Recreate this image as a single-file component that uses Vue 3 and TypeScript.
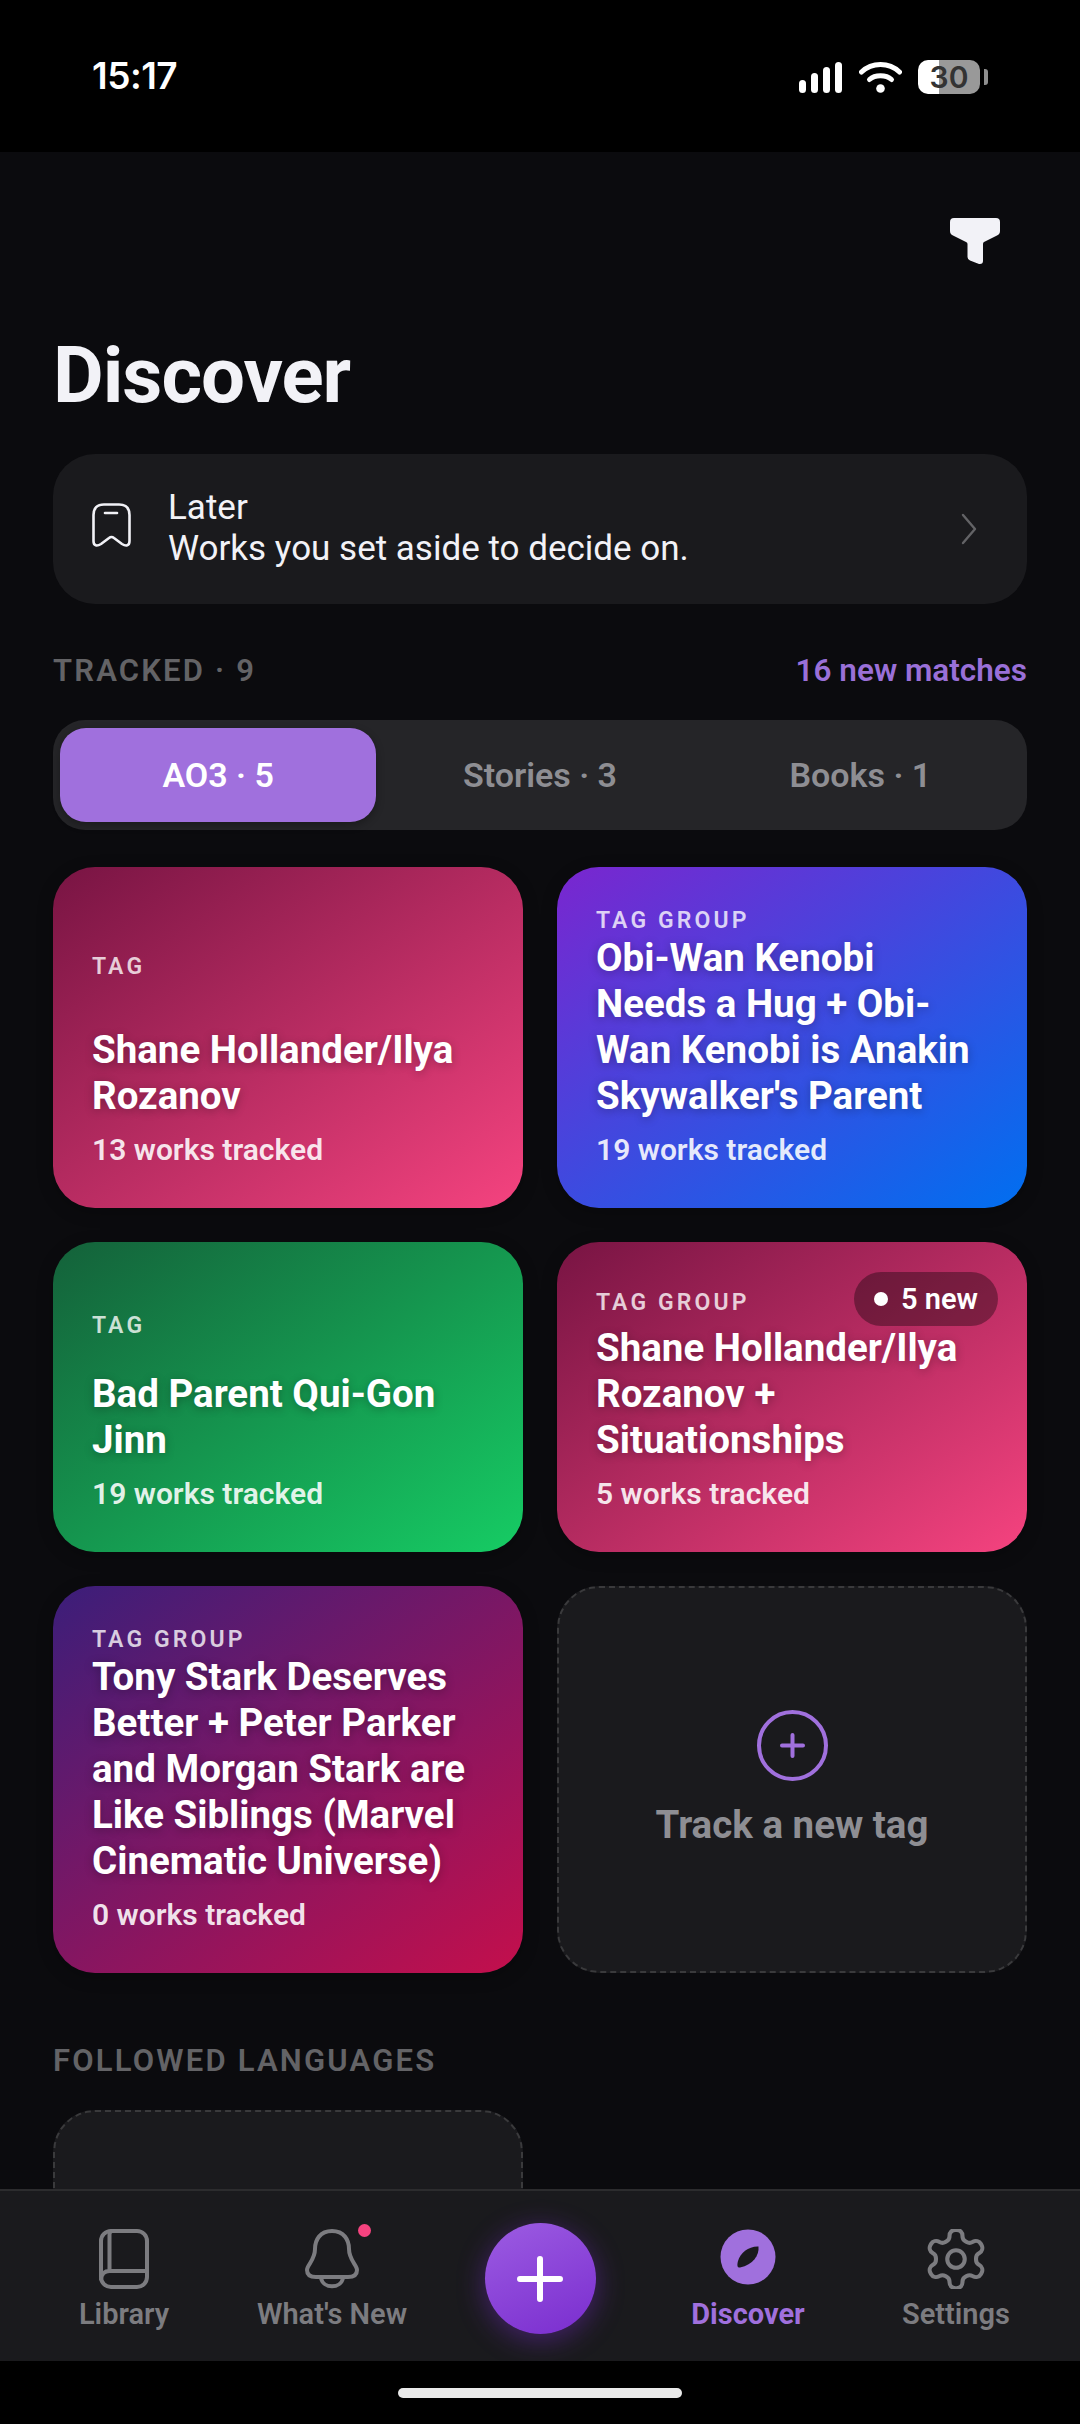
<script setup lang="ts">
interface Card { kind: string; title: string; count: number; grad: string; badge?: string }
const cards: Card[] = [
  { kind: 'TAG', title: 'Shane Hollander/Ilya Rozanov', count: 13, grad: 'pink' },
  { kind: 'TAG GROUP', title: "Obi-Wan Kenobi Needs a Hug + Obi-Wan Kenobi is Anakin Skywalker's Parent", count: 19, grad: 'blue' },
  { kind: 'TAG', title: 'Bad Parent Qui-Gon Jinn', count: 19, grad: 'green' },
  { kind: 'TAG GROUP', title: 'Shane Hollander/Ilya Rozanov + Situationships', count: 5, grad: 'pink', badge: '5 new' },
  { kind: 'TAG GROUP', title: 'Tony Stark Deserves Better + Peter Parker and Morgan Stark are Like Siblings (Marvel Cinematic Universe)', count: 0, grad: 'plum' },
]
const tabs = ['AO3 · 5', 'Stories · 3', 'Books · 1']
</script>

<template>
  <div class="phone">
    <header class="status">
      <span class="time">15:17</span>
      <div class="status-icons">
        <div class="signal"><i class="b1"></i><i class="b2"></i><i class="b3"></i><i class="b4"></i></div>
        <svg class="wifi" width="43" height="32" viewBox="0 0 43 32" fill="none" stroke="#fff" stroke-linecap="round">
          <path d="M2.5 11 C13 1 30 1 40.5 11" stroke-width="5"/>
          <path d="M10.5 18.5 C16 13.5 27 13.5 32.5 18.5" stroke-width="5"/>
          <circle cx="21.5" cy="27.5" r="4.3" fill="#fff" stroke="none"/>
        </svg>
        <div class="battery"><span>30</span></div>
        <i class="tip"></i>
      </div>
    </header>

    <main class="main">
      <div class="toolbar">
        <svg width="50" height="47" viewBox="0 0 50 47" fill="#f2f2f7">
          <path d="M4 0 H46 Q50 0 50 4 V13 Q50 16 47 17.500 L34 24 Q33 24.500 33 26 V43 Q33 46.500 29 46 L20 42.500 Q17.500 41.500 17.500 39 V26 Q17.500 24.500 16 24 L3 17.500 Q0 16 0 13 V4 Q0 0 4 0 Z"/>
        </svg>
      </div>
      <h1 class="title">Discover</h1>

      <section class="later">
        <svg class="bookmark" width="39" height="44" viewBox="0 0 39 44" fill="none" stroke="#f2f2f7" stroke-width="2.600" stroke-linecap="round" stroke-linejoin="round">
          <path d="M12 1.500 H27 Q37.500 1.500 37.500 12 V38 C37.500 43 34 43.500 30 41 L22 35 Q19.500 33 17 35 L9 41 C5 43.500 1.500 43 1.500 38 V12 Q1.500 1.500 12 1.500 Z"/>
          <path d="M13 10 H25"/>
        </svg>
        <div class="later-text">
          <div>Later</div>
          <div>Works you set aside to decide on.</div>
        </div>
        <svg width="16" height="32" viewBox="0 0 16 32" fill="none" stroke="#636366" stroke-width="2.400" stroke-linecap="round" stroke-linejoin="round">
          <path d="M2 2 L14 16 L2 30"/>
        </svg>
      </section>

      <div class="section-head">
        <span class="eyebrow">TRACKED · 9</span>
        <span class="matches">16 new matches</span>
      </div>

      <div class="tabs">
        <div v-for="(t, i) in tabs" :key="t" class="tab" :class="{ active: i === 0 }">{{ t }}</div>
      </div>

      <div class="grid">
        <article v-for="c in cards" :key="c.title" class="card" :class="c.grad">
          <div class="kind"><span>{{ c.kind }}</span></div>
          <div class="name">{{ c.title }}</div>
          <div class="count">{{ c.count }} works tracked</div>
          <div v-if="c.badge" class="badge"><i></i>{{ c.badge }}</div>
        </article>
        <article class="add">
          <svg width="71" height="71" viewBox="0 0 71 71" fill="none" stroke="#a070dd" stroke-linecap="round">
            <circle cx="35.500" cy="35.500" r="33.500" stroke-width="4"/>
            <path d="M35.500 25 V46 M25 35.500 H46" stroke-width="4"/>
          </svg>
          <div class="add-label">Track a new tag</div>
        </article>
      </div>

      <div class="eyebrow lang">FOLLOWED LANGUAGES</div>
      <div class="grid">
        <article class="add"></article>
      </div>
    </main>

    <nav class="nav">
      <div class="nav-item">
        <svg width="50" height="60" viewBox="0 0 50 60" fill="none" stroke="#7c7c80" stroke-width="4" stroke-linecap="round" stroke-linejoin="round">
          <rect x="2" y="2" width="46" height="56" rx="10"/>
          <path d="M12 2.500 Q10.500 3 10.500 6 V42 H48"/>
          <path d="M2 50 Q3 42 10.500 42"/>
        </svg>
        <span>Library</span>
      </div>
      <div class="nav-item">
        <div class="bell">
          <svg width="54" height="60" viewBox="0 0 54 60" fill="none" stroke="#7c7c80" stroke-width="4" stroke-linecap="round" stroke-linejoin="round">
            <path d="M27 2 C15 2 10 11 10 20 C10 31 2 36 2 41 C2 46 6 48 11 48 H43 C48 48 52 46 52 41 C52 36 44 31 44 20 C44 11 39 2 27 2 Z"/>
            <path d="M16 49 C18 60 36 60 38 49"/>
          </svg>
          <i class="dot"></i>
        </div>
        <span>What's New</span>
      </div>
      <div class="nav-item plus-wrap">
        <div class="plus">
          <svg width="46" height="46" viewBox="0 0 46 46" stroke="#fff" stroke-width="6" stroke-linecap="round">
            <path d="M23 3 V43 M3 23 H43"/>
          </svg>
        </div>
      </div>
      <div class="nav-item on">
        <svg width="56" height="60" viewBox="0 0 56 60">
          <circle cx="28" cy="28" r="27.500" fill="#a070dd"/>
          <path d="M38.500 17.500 C39.500 26 33 36 20 38.500 C17 39 17 36 18 32 C20 24 29 17 38.500 17.500 Z" fill="#1a1a1d"/>
        </svg>
        <span>Discover</span>
      </div>
      <div class="nav-item">
        <svg width="70" height="60" viewBox="0 0 24 20.570" fill="none" stroke="#7c7c80" stroke-width="1.400" stroke-linecap="round" stroke-linejoin="round">
          <g transform="translate(0 -1.710)">
            <path d="M12.220 2h-.44a2 2 0 0 0-2 2v.18a2 2 0 0 1-1 1.730l-.43.25a2 2 0 0 1-2 0l-.15-.08a2 2 0 0 0-2.730.73l-.22.38a2 2 0 0 0 .73 2.730l.15.1a2 2 0 0 1 1 1.720v.51a2 2 0 0 1-1 1.740l-.15.09a2 2 0 0 0-.73 2.730l.22.38a2 2 0 0 0 2.730.73l.15-.08a2 2 0 0 1 2 0l.43.25a2 2 0 0 1 1 1.730V20a2 2 0 0 0 2 2h.44a2 2 0 0 0 2-2v-.18a2 2 0 0 1 1-1.730l.43-.25a2 2 0 0 1 2 0l.15.08a2 2 0 0 0 2.730-.73l.22-.39a2 2 0 0 0-.73-2.730l-.15-.08a2 2 0 0 1-1-1.740v-.5a2 2 0 0 1 1-1.740l.15-.09a2 2 0 0 0 .73-2.730l-.22-.38a2 2 0 0 0-2.730-.73l-.15.08a2 2 0 0 1-2 0l-.43-.25a2 2 0 0 1-1-1.730V4a2 2 0 0 0-2-2z"/>
            <circle cx="12" cy="12" r="3"/>
          </g>
        </svg>
        <span>Settings</span>
      </div>
    </nav>
    <footer class="home"><i></i></footer>
  </div>
</template>

<style scoped>
.phone {
  width: 1080px;
  height: 2424px;
  display: flex;
  flex-direction: column;
  background: #0b0b0e;
  font-family: Roboto, "Liberation Sans", sans-serif;
  overflow: hidden;
}
.status {
  height: 152px;
  flex: none;
  background: #000;
  display: flex;
  justify-content: space-between;
  padding: 57px 92px 0 92px;
  box-sizing: border-box;
}
.time {
  font-family: Inter, Roboto, sans-serif;
  font-size: 37px;
  font-weight: 600;
  line-height: 38px;
  color: #fff;
  letter-spacing: -0.5px;
}
.status-icons {
  display: flex;
  align-items: flex-start;
  padding-top: 3px;
  height: 34px;
}
.signal {
  display: flex;
  align-items: flex-end;
  gap: 5px;
  height: 31px;
  margin-top: 2px;
  margin-right: 17px;
}
.signal i { width: 7px; background: #fff; border-radius: 4px; display: block; }
.b1 { height: 13px; }
.b2 { height: 20px; }
.b3 { height: 26px; }
.b4 { height: 31px; }
.wifi { margin-top: 1px; margin-right: 16px; }
.battery {
  width: 62px;
  height: 34px;
  border-radius: 10px;
  background: linear-gradient(90deg, #fff 0 21px, #999 21px);
  display: flex;
  align-items: center;
  justify-content: center;
}
.battery span {
  font-family: Inter, Roboto, sans-serif;
  font-size: 30px;
  font-weight: 600;
  color: #333;
  line-height: 34px;
}
.tip {
  width: 4px;
  height: 16px;
  margin: 9px 0 0 4px;
  background: #8e8e8e;
  border-radius: 0 3px 3px 0;
  display: block;
}
.main {
  flex: 1;
  min-height: 0;
  overflow: hidden;
  padding: 0 53px;
}
.toolbar {
  display: flex;
  justify-content: flex-end;
  padding: 66px 27px 0 0;
  height: 47px;
}
.title {
  margin: 66px 0 0 0;
  font-size: 78px;
  line-height: 90px;
  font-weight: 700;
  color: #f2f2f7;
  letter-spacing: -1px;
}
.later {
  margin-top: 33px;
  height: 150px;
  box-sizing: border-box;
  background: #1a1a1d;
  border-radius: 42px;
  display: flex;
  align-items: center;
  padding: 0 50px 0 39px;
  color: #f2f2f7;
}
.bookmark { flex: none; margin-bottom: 9px; }
.later-text {
  flex: 1;
  margin-left: 37px;
  margin-top: -2px;
  font-size: 35px;
  line-height: 41px;
  font-weight: 400;
}
.section-head {
  margin-top: 49px;
  display: flex;
  justify-content: space-between;
  align-items: center;
  height: 36px;
}
.eyebrow {
  font-size: 31px;
  font-weight: 600;
  letter-spacing: 2.200px;
  color: #636366;
  line-height: 36px;
}
.matches {
  font-size: 31.500px;
  font-weight: 600;
  color: #9a70d8;
  line-height: 36px;
}
.tabs {
  margin-top: 31px;
  height: 110px;
  box-sizing: border-box;
  padding: 8px 7px;
  border-radius: 32px;
  background: #252528;
  display: grid;
  grid-template-columns: repeat(3, 1fr);
  gap: 1px;
}
.tab {
  display: flex;
  align-items: center;
  justify-content: center;
  font-size: 34px;
  font-weight: 600;
  color: #8e8e93;
  border-radius: 26px;
}
.tab.active {
  background: #a070dd;
  color: #fff;
  margin-right: 3px;
  box-shadow: 0 3px 8px rgba(0, 0, 0, 0.3);
}
.grid {
  margin-top: 37px;
  display: grid;
  grid-template-columns: 470px 470px;
  gap: 34px;
}
.card {
  position: relative;
  min-height: 310px;
  box-sizing: border-box;
  border-radius: 42px;
  padding: 40px 39px;
  display: flex;
  flex-direction: column;
  color: #fff;
  box-shadow: 0 4px 16px rgba(0, 0, 0, 0.25);
}
.pink { background: linear-gradient(145deg, #781443 0%, #f5437f 100%); }
.blue { background: linear-gradient(145deg, #7a26cf 0%, #006ff0 100%); }
.green { background: linear-gradient(145deg, #14613a 0%, #16cc64 100%); }
.plum { background: linear-gradient(145deg, #3b1e7a 0%, #c40f4c 100%); }
.kind {
  flex: 1;
  display: flex;
  align-items: center;
  min-height: 26px;
  font-size: 23px;
  line-height: 25px;
  font-weight: 600;
  letter-spacing: 3.100px;
  color: rgba(255, 255, 255, 0.78);
}
.name {
  margin-top: 2px;
  font-size: 38.500px;
  line-height: 46px;
  font-weight: 700;
  text-shadow: 0 2px 10px rgba(0, 0, 0, 0.28);
}
.count {
  margin-top: 13px;
  font-size: 30px;
  line-height: 36px;
  font-weight: 600;
  color: rgba(255, 255, 255, 0.88);
}
.badge {
  position: absolute;
  top: 30px;
  right: 29px;
  height: 54px;
  padding: 0 20px 0 20px;
  border-radius: 27px;
  background: rgba(0, 0, 0, 0.35);
  display: flex;
  align-items: center;
  font-size: 29px;
  font-weight: 600;
}
.badge i {
  width: 14px;
  height: 14px;
  border-radius: 50%;
  background: #fff;
  margin-right: 13px;
  display: block;
}
.add {
  min-height: 310px;
  box-sizing: border-box;
  border-radius: 42px;
  border: 2px dashed #3a3a3c;
  background: #1a1a1d;
  display: flex;
  flex-direction: column;
  align-items: center;
  justify-content: center;
}
.add-label {
  margin-top: 20px;
  font-size: 38.500px;
  line-height: 48px;
  font-weight: 700;
  color: #8e8e93;
}
.lang { margin-top: 70px; }
.lang + .grid { margin-top: 31px; }
.nav {
  flex: none;
  height: 172px;
  box-sizing: border-box;
  background: #1a1a1d;
  border-top: 2px solid #2c2c2e;
  padding: 38px 20px 0;
  display: grid;
  grid-template-columns: repeat(5, 208px);
}
.nav-item {
  display: flex;
  flex-direction: column;
  align-items: center;
  font-size: 29px;
  font-weight: 600;
  color: #7c7c80;
  line-height: 36px;
}
.nav-item span { margin-top: 7px; }
.nav-item.on { color: #a070dd; font-weight: 700; }
.bell { position: relative; height: 60px; }
.dot {
  position: absolute;
  top: -5px;
  right: -12px;
  width: 13px;
  height: 13px;
  border-radius: 50%;
  background: #f5437f;
  display: block;
}
.plus-wrap { justify-content: flex-start; }
.plus {
  width: 111px;
  height: 111px;
  margin-top: -6px;
  border-radius: 50%;
  background: linear-gradient(155deg, #9c5ce2 0%, #7a2dcf 100%);
  box-shadow: 0 6px 28px rgba(122, 45, 207, 0.45);
  display: flex;
  align-items: center;
  justify-content: center;
}
.home {
  flex: none;
  height: 63px;
  background: #000;
  display: flex;
  justify-content: center;
  padding-top: 27px;
  box-sizing: border-box;
}
.home i {
  width: 284px;
  height: 10px;
  border-radius: 5px;
  background: #eaeaea;
  display: block;
}
</style>
